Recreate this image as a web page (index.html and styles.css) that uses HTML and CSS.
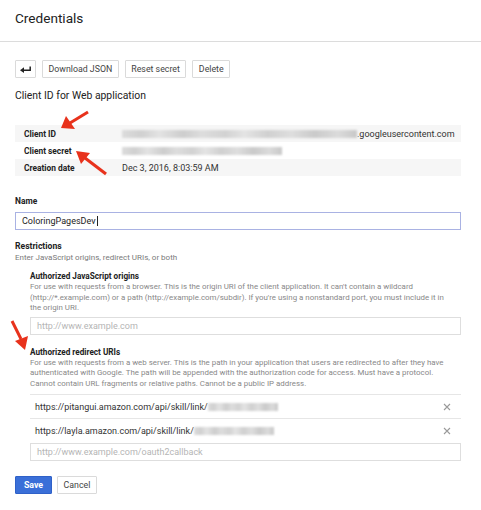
FILE: index.html
```html
<!DOCTYPE html>
<html>
<head>
<meta charset="utf-8">
<link rel="stylesheet" href="styles.css">
</head>
<body>
<header class="header"><h1 class="title">Credentials</h1></header>
<main class="content">
  <div class="toolbar">
    <button class="btn btn-icon" aria-label="Back">
      <svg width="11" height="8" viewBox="0 0 11 8"><path d="M0 5.2 L4 2.2 L4 8 Z" fill="#222"/><path d="M3 5.2 H10.2 V1.5" fill="none" stroke="#222" stroke-width="1.5"/></svg>
    </button>
    <button class="btn">Download JSON</button>
    <button class="btn">Reset secret</button>
    <button class="btn">Delete</button>
  </div>
  <h2 class="subtitle">Client ID for Web application</h2>
  <div class="info">
    <div class="info-row"><span class="info-label">Client ID</span><span class="info-value"><span class="blur blur-id"></span>.googleusercontent.com</span></div>
    <div class="info-row"><span class="info-label">Client secret</span><span class="info-value"><span class="blur blur-secret"></span></span></div>
    <div class="info-row"><span class="info-label">Creation date</span><span class="info-value">Dec 3, 2016, 8:03:59 AM</span></div>
  </div>
  <div class="field-label">Name</div>
  <div class="input input-focus">ColoringPagesDev<span class="caret"></span></div>
  <div class="section-title">Restrictions</div>
  <div class="hint">Enter JavaScript origins, redirect URIs, or both</div>
  <div class="sub">
    <div class="sub-title">Authorized JavaScript origins</div>
    <p class="desc">For use with requests from a browser. This is the origin URI of the client application. It can't contain a wildcard<br>(http://*.example.com) or a path (http://example.com/subdir). If you're using a nonstandard port, you must include it in<br>the origin URI.</p>
    <div class="input placeholder">http://www.example.com</div>
    <div class="sub-title sub-title-2">Authorized redirect URIs</div>
    <p class="desc">For use with requests from a web server. This is the path in your application that users are redirected to after they have<br>authenticated with Google. The path will be appended with the authorization code for access. Must have a protocol.<br>Cannot contain URL fragments or relative paths. Cannot be a public IP address.</p>
    <ul class="uri-list">
      <li class="uri"><span class="uri-text">https://pitangui.amazon.com/api/skill/link/<span class="blur blur-uri1"></span></span><svg class="remove" width="8" height="8" viewBox="0 0 8 8"><path d="M1 1 L7 7 M7 1 L1 7" stroke="#9a9a9a" stroke-width="1.1"/></svg></li>
      <li class="uri"><span class="uri-text">https://layla.amazon.com/api/skill/link/<span class="blur blur-uri2"></span></span><svg class="remove" width="8" height="8" viewBox="0 0 8 8"><path d="M1 1 L7 7 M7 1 L1 7" stroke="#9a9a9a" stroke-width="1.1"/></svg></li>
    </ul>
    <div class="input placeholder placeholder-last">http://www.example.com/oauth2callback</div>
  </div>
  <div class="actions">
    <button class="btn btn-primary">Save</button>
    <button class="btn btn-cancel">Cancel</button>
  </div>
</main>
<svg class="arrows" width="481" height="510" viewBox="0 0 481 510">
  <g fill="#e8321c" stroke="#e8321c">
    <line x1="88" y1="112" x2="70" y2="123" stroke-width="3"/>
    <polygon points="61,128 66,116 75,129" stroke="none"/>
    <line x1="106" y1="174" x2="85" y2="158" stroke-width="3"/>
    <polygon points="76,151 90,153 81,164" stroke="none"/>
    <line x1="12" y1="321" x2="21" y2="339" stroke-width="3"/>
    <polygon points="25,350 15,341 28,336" stroke="none"/>
  </g>
</svg>
</body>
</html>
```
FILE: styles.css
```css
* { box-sizing: border-box; }
html, body { margin: 0; padding: 0; background: #fff; }
body {
  font-family: Roboto, "Noto Sans", Arial, sans-serif;
  color: #222;
  width: 481px;
  height: 510px;
  position: relative;
  overflow: hidden;
}
.header {
  height: 42px;
  border-bottom: 1px solid #dcdcdc;
  padding: 10px 15px 0;
}
.title {
  margin: 0;
  font-size: 13.6px;
  font-weight: 400;
  line-height: 17px;
  color: #222;
}
.content { padding: 0 20px 0 15px; }
.toolbar { display: flex; gap: 6px; margin-top: 18px; }
.btn {
  font-family: inherit;
  font-size: 8.8px;
  color: #444;
  background: #fff;
  border: 1px solid #dadada;
  border-radius: 1px;
  height: 18px;
  padding: 0 5.5px;
  line-height: 16px;
  cursor: pointer;
}
.btn-icon { width: 21px; padding: 0; display: flex; align-items: center; justify-content: center; }
.subtitle {
  margin: 11px 0 0;
  font-size: 10.4px;
  font-weight: 400;
  line-height: 14px;
  color: #222;
}
.info { margin-top: 22px; }
.info-row { display: flex; align-items: center; height: 17px; padding-left: 9px; }
.info-row:nth-child(odd) { background: #f6f6f6; }
.info-label { width: 98px; font-size: 8.4px; font-weight: 700; color: #222; }
.info-value { display: flex; align-items: center; font-size: 9px; color: #333; }
.blur {
  display: inline-block;
  height: 8px;
  filter: blur(1.2px);
  background: linear-gradient(90deg, #dcdcdc 0%, #d0d0d0 8%, #e3e3e3 16%, #cdcdcd 26%, #dddddd 34%, #d2d2d2 44%, #e4e4e4 52%, #d0d0d0 62%, #dedede 72%, #cacaca 82%, #dbdbdb 92%, #c8c8c8 100%);
}
.blur-id { width: 235px; }
.blur-secret { width: 160px; }
.blur-uri1 { width: 70px; vertical-align: -1px; }
.blur-uri2 { width: 80px; vertical-align: -1px; }
.field-label { margin-top: 20px; font-size: 8.4px; font-weight: 700; line-height: 11px; color: #222; }
.input {
  margin-top: 5px;
  height: 18px;
  border: 1px solid #dedede;
  padding: 0 6px;
  font-size: 9px;
  line-height: 16px;
  color: #222;
  display: flex;
  align-items: center;
}
.input-focus { border-color: #a9b2e3; }
.caret { display: inline-block; width: 1px; height: 10px; background: #222; margin-left: 1px; }
.placeholder { color: #b5b5b5; margin-top: 3px; }
.placeholder-last { margin-top: 1px; }
.section-title { margin-top: 11px; font-size: 8.6px; font-weight: 700; line-height: 11px; color: #222; }
.hint { font-size: 8px; line-height: 11px; color: #7a7a7a; }
.sub { padding-left: 15px; }
.sub-title { margin-top: 8px; font-size: 8.2px; font-weight: 700; line-height: 11px; color: #222; }
.sub-title-2 { margin-top: 12px; }
.desc { margin: 0; font-size: 7.9px; line-height: 10.5px; color: #888; white-space: nowrap; }
.uri-list { list-style: none; margin: 5px 0 0; padding: 0; }
.uri {
  height: 24px;
  border-top: 1px solid #e6e6e6;
  display: flex;
  align-items: center;
  justify-content: space-between;
  padding: 0 10px 0 5px;
  font-size: 9px;
  color: #333;
}
.uri-text { display: flex; align-items: center; }
.actions { display: flex; gap: 5px; margin-top: 15px; }
.btn-primary {
  background: #3a6fd8;
  border-color: #2f61c8;
  color: #fff;
  font-weight: 700;
  width: 37px;
  padding: 0;
}
.btn-cancel { width: 40px; padding: 0; }
.arrows { position: absolute; left: 0; top: 0; pointer-events: none; }
```
